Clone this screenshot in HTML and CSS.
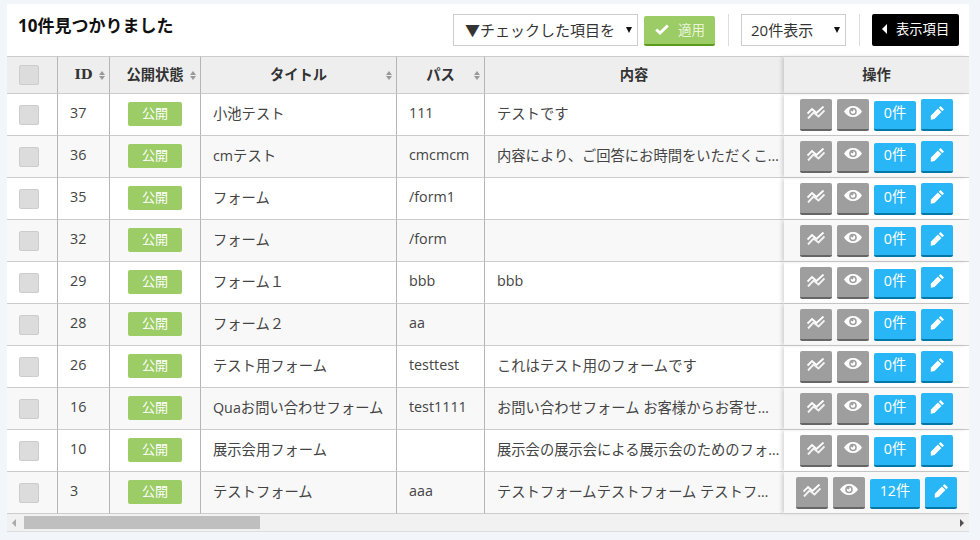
FILE: index.html
```html
<!DOCTYPE html>
<html lang="ja">
<head>
<meta charset="utf-8">
<title>フォーム一覧</title>
<link rel="stylesheet" href="styles.css">
</head>
<body>
<svg class="defs" aria-hidden="true">
  <symbol id="i-chart" viewBox="0 0 18 13"><path d="M0.5 7.500 L5 3 L9.500 7 L16.500 0.500" fill="none" stroke="#fff" stroke-width="1.900"/><path d="M1 12.500 L6.500 6.500 L11.500 10.500 L17.500 4.500" fill="none" stroke="#f4f4f4" stroke-width="1.900"/></symbol>
  <symbol id="i-eye" viewBox="0 0 18 11"><path fill="#fff" fill-rule="evenodd" d="M0 5.500C2 2 5.300 0 9 0s7 2 9 5.500C16 9 12.700 11 9 11S2 9 0 5.500zM9 1.700a3.800 3.800 0 1 0 0 7.600 3.800 3.800 0 0 0 0-7.600z"/><path fill="#fff" d="M9 3.200a2.300 2.300 0 1 1-2.300 2.300c0-.3.100-.6.200-.9.300.5.800.8 1.300.8.700 0 1.300-.6 1.300-1.300 0-.3-.1-.6-.5-.9z"/></symbol>
  <symbol id="i-pencil" viewBox="0 0 14 14"><path fill="#fff" d="M10.500 0 L14 3.500 L12.300 5.200 L8.800 1.700zM7.900 2.600 L11.400 6.100 L4.500 13 L0.800 13.700 L0.800 9.700z"/></symbol>
  <symbol id="i-check" viewBox="0 0 14 11"><path fill="none" stroke="#fff" stroke-width="3" d="M1.200 5.500 L5 9 L12.800 1.500"/></symbol>
</svg>
<main class="panel">
  <header class="toolbar">
    <h1 class="count">10件見つかりました</h1>
    <div class="controls">
      <div class="select-wrap select-action">
        <select class="select"><option>▼チェックした項目を</option></select>
      </div>
      <button class="apply" type="button"><svg class="apply-icon"><use href="#i-check"/></svg>適用</button>
      <span class="divider"></span>
      <div class="select-wrap select-count">
        <select class="select"><option>20件表示</option></select>
      </div>
      <span class="divider"></span>
      <button class="columns" type="button"><span class="caret-left"></span>表示項目</button>
    </div>
  </header>
  <table class="grid">
    <colgroup>
      <col class="c-check"><col class="c-id"><col class="c-status"><col class="c-title"><col class="c-path"><col class="c-body"><col class="c-ops">
    </colgroup>
    <thead>
      <tr>
        <th class="cell-check"><span class="check"></span></th>
        <th class="sortable"><span class="id-label">ID</span></th>
        <th class="sortable">公開状態</th>
        <th class="sortable">タイトル</th>
        <th class="sortable">パス</th>
        <th class="body">内容</th>
        <th class="ops">操作</th>
      </tr>
    </thead>
    <tbody>
      <tr><td class="cell-check"><span class="check"></span></td><td>37</td><td class="mid"><span class="badge">公開</span></td><td>小池テスト</td><td>111</td><td class="body">テストです</td><td class="ops"><div class="btns"><a class="btn gray"><svg class="ic-chart"><use href="#i-chart"/></svg></a><a class="btn gray"><svg class="ic-eye"><use href="#i-eye"/></svg></a><a class="btn num">0件</a><a class="btn blue"><svg class="ic-pencil"><use href="#i-pencil"/></svg></a></div></td></tr>
      <tr><td class="cell-check"><span class="check"></span></td><td>36</td><td class="mid"><span class="badge">公開</span></td><td>cmテスト</td><td>cmcmcm</td><td class="body">内容により、ご回答にお時間をいただくこ…</td><td class="ops"><div class="btns"><a class="btn gray"><svg class="ic-chart"><use href="#i-chart"/></svg></a><a class="btn gray"><svg class="ic-eye"><use href="#i-eye"/></svg></a><a class="btn num">0件</a><a class="btn blue"><svg class="ic-pencil"><use href="#i-pencil"/></svg></a></div></td></tr>
      <tr><td class="cell-check"><span class="check"></span></td><td>35</td><td class="mid"><span class="badge">公開</span></td><td>フォーム</td><td>/form1</td><td class="body"></td><td class="ops"><div class="btns"><a class="btn gray"><svg class="ic-chart"><use href="#i-chart"/></svg></a><a class="btn gray"><svg class="ic-eye"><use href="#i-eye"/></svg></a><a class="btn num">0件</a><a class="btn blue"><svg class="ic-pencil"><use href="#i-pencil"/></svg></a></div></td></tr>
      <tr><td class="cell-check"><span class="check"></span></td><td>32</td><td class="mid"><span class="badge">公開</span></td><td>フォーム</td><td>/form</td><td class="body"></td><td class="ops"><div class="btns"><a class="btn gray"><svg class="ic-chart"><use href="#i-chart"/></svg></a><a class="btn gray"><svg class="ic-eye"><use href="#i-eye"/></svg></a><a class="btn num">0件</a><a class="btn blue"><svg class="ic-pencil"><use href="#i-pencil"/></svg></a></div></td></tr>
      <tr><td class="cell-check"><span class="check"></span></td><td>29</td><td class="mid"><span class="badge">公開</span></td><td>フォーム１</td><td>bbb</td><td class="body">bbb</td><td class="ops"><div class="btns"><a class="btn gray"><svg class="ic-chart"><use href="#i-chart"/></svg></a><a class="btn gray"><svg class="ic-eye"><use href="#i-eye"/></svg></a><a class="btn num">0件</a><a class="btn blue"><svg class="ic-pencil"><use href="#i-pencil"/></svg></a></div></td></tr>
      <tr><td class="cell-check"><span class="check"></span></td><td>28</td><td class="mid"><span class="badge">公開</span></td><td>フォーム２</td><td>aa</td><td class="body"></td><td class="ops"><div class="btns"><a class="btn gray"><svg class="ic-chart"><use href="#i-chart"/></svg></a><a class="btn gray"><svg class="ic-eye"><use href="#i-eye"/></svg></a><a class="btn num">0件</a><a class="btn blue"><svg class="ic-pencil"><use href="#i-pencil"/></svg></a></div></td></tr>
      <tr><td class="cell-check"><span class="check"></span></td><td>26</td><td class="mid"><span class="badge">公開</span></td><td>テスト用フォーム</td><td>testtest</td><td class="body">これはテスト用のフォームです</td><td class="ops"><div class="btns"><a class="btn gray"><svg class="ic-chart"><use href="#i-chart"/></svg></a><a class="btn gray"><svg class="ic-eye"><use href="#i-eye"/></svg></a><a class="btn num">0件</a><a class="btn blue"><svg class="ic-pencil"><use href="#i-pencil"/></svg></a></div></td></tr>
      <tr><td class="cell-check"><span class="check"></span></td><td>16</td><td class="mid"><span class="badge">公開</span></td><td>Quaお問い合わせフォーム</td><td>test1111</td><td class="body">お問い合わせフォーム お客様からお寄せ…</td><td class="ops"><div class="btns"><a class="btn gray"><svg class="ic-chart"><use href="#i-chart"/></svg></a><a class="btn gray"><svg class="ic-eye"><use href="#i-eye"/></svg></a><a class="btn num">0件</a><a class="btn blue"><svg class="ic-pencil"><use href="#i-pencil"/></svg></a></div></td></tr>
      <tr><td class="cell-check"><span class="check"></span></td><td>10</td><td class="mid"><span class="badge">公開</span></td><td>展示会用フォーム</td><td></td><td class="body">展示会の展示会による展示会のためのフォ…</td><td class="ops"><div class="btns"><a class="btn gray"><svg class="ic-chart"><use href="#i-chart"/></svg></a><a class="btn gray"><svg class="ic-eye"><use href="#i-eye"/></svg></a><a class="btn num">0件</a><a class="btn blue"><svg class="ic-pencil"><use href="#i-pencil"/></svg></a></div></td></tr>
      <tr><td class="cell-check"><span class="check"></span></td><td>3</td><td class="mid"><span class="badge">公開</span></td><td>テストフォーム</td><td>aaa</td><td class="body">テストフォームテストフォーム テストフ…</td><td class="ops"><div class="btns"><a class="btn gray"><svg class="ic-chart"><use href="#i-chart"/></svg></a><a class="btn gray"><svg class="ic-eye"><use href="#i-eye"/></svg></a><a class="btn num wide">12件</a><a class="btn blue"><svg class="ic-pencil"><use href="#i-pencil"/></svg></a></div></td></tr>
    </tbody>
  </table>
  <div class="scrollbar">
    <span class="arrow arrow-left"></span>
    <div class="track"><span class="thumb"></span></div>
    <span class="arrow arrow-right"></span>
  </div>
</main>
</body>
</html>
```
FILE: styles.css
```css
* { box-sizing: border-box; }
html, body { margin: 0; height: 100%; }
body {
  background: #f2f6fa;
  padding: 4px 11px 0 7px;
  font-family: "Open Sans", "Noto Sans CJK JP", sans-serif;
  font-size: 14.3px;
  color: #444;
  overflow: hidden;
}
.defs { display: none; }
.panel { background: #fff; width: 962px; border-bottom: 1px solid #ddd; }
.toolbar {
  height: 52px;
  display: flex;
  justify-content: space-between;
  align-items: flex-start;
  padding: 10px 10px 0 11px;
}
.count {
  margin: 0;
  font-size: 17px;
  line-height: 24px;
  font-weight: 700;
  color: #111;
}
.controls { display: flex; align-items: flex-start; }
.select-wrap { position: relative; height: 32px; }
.select-wrap::after {
  content: "";
  position: absolute;
  right: 6px;
  top: 13px;
  border-left: 3px solid transparent;
  border-right: 3px solid transparent;
  border-top: 6px solid #111;
}
.select-action { width: 185px; }
.select-count { width: 105px; }
.select {
  appearance: none;
  -webkit-appearance: none;
  width: 100%;
  height: 32px;
  border: 1px solid #ccc;
  border-radius: 0;
  background: #fff;
  color: #333;
  font: 15px "Open Sans", "Noto Sans CJK JP", sans-serif;
  padding: 0 0 0 9px;
}
.select-action .select { padding-left: 11px; }
.apply {
  width: 71px;
  height: 30px;
  margin: 2px 0 0 6px;
  border: 0;
  border-bottom: 2px solid #5c9a1c;
  border-radius: 2px;
  background: #9ccc65;
  color: #e8f5d8;
  font: 13.5px "Open Sans", "Noto Sans CJK JP", sans-serif;
  display: flex;
  align-items: center;
  gap: 9px;
  padding: 0 0 2px 11px;
}
.apply-icon { width: 14px; height: 11px; }
.divider { width: 1px; height: 32px; background: #ddd; margin: 0 12px 0 13px; }
.columns {
  width: 87px;
  height: 32px;
  border: 0;
  border-radius: 2px;
  background: #000;
  color: #fff;
  font: 13.3px "Open Sans", "Noto Sans CJK JP", sans-serif;
  display: flex;
  align-items: center;
  gap: 9px;
  padding: 0 0 3px 10px;
}
.caret-left {
  border-top: 5px solid transparent;
  border-bottom: 5px solid transparent;
  border-right: 5px solid #fff;
}
.grid {
  width: 962px;
  table-layout: fixed;
  border-collapse: separate;
  border-spacing: 0;
}
.c-check { width: 51px; }
.c-id { width: 52px; }
.c-status { width: 91px; }
.c-title { width: 196px; }
.c-path { width: 88px; }
.c-body { width: 299px; }
.c-ops { width: 185px; }
th, td {
  border-right: 1px solid #b5b5b5;
  border-bottom: 1px solid #ccc;
  padding: 0 0 4px 12px;
  white-space: nowrap;
  overflow: hidden;
}
th {
  height: 38px;
  border-top: 1px solid #ccc;
  background: #eee;
  color: #333;
  font-weight: 700;
  text-align: center;
  padding: 0 0 3px;
  position: relative;
}
td { height: 42px; }
tbody tr:nth-child(even) td { background: #f8f8f8; }
.id-label { font-family: "DejaVu Serif", serif; font-size: 13.5px; }
.sortable::before,
.sortable::after {
  content: "";
  position: absolute;
  right: 4px;
  border-left: 3px solid transparent;
  border-right: 3px solid transparent;
}
.sortable::before { top: 14px; border-bottom: 4px solid #999; }
.sortable::after { top: 19px; border-top: 4px solid #999; }
th.cell-check, td.cell-check { padding: 0 0 0 12px; }
.check {
  display: block;
  width: 20px;
  height: 20px;
  background: #dcdcdc;
  border: 1px solid #ccc;
  border-radius: 2px;
}
td.mid { padding: 0 0 1px 18px; }
.badge {
  display: block;
  width: 54px;
  height: 24px;
  line-height: 22px;
  background: #9ccc65;
  border-radius: 2px;
  color: #fff;
  font-size: 13px;
  text-align: center;
}
th.body, td.body { border-right-color: transparent; }
td.body { padding-right: 0; }
th.ops { padding: 0 0 3px; }
.ops { border-right: 0; box-shadow: -3px 0 4px -1px rgba(0,0,0,.16); position: relative; }
td.ops { padding: 0; }
.btns {
  display: flex;
  justify-content: center;
  align-items: flex-end;
  gap: 5px;
}
.btn {
  height: 32px;
  width: 32px;
  display: flex;
  align-items: center;
  justify-content: center;
  border-radius: 2px;
  color: #fff;
}
.gray { background: #9e9e9e; border-bottom: 2px solid #666; padding-top: 1px; }
.blue { background: #29b6f6; border-bottom: 2px solid #0277a8; }
.num { background: #29b6f6; border-bottom: 2px solid #0277a8; height: 30px; width: 42px; font-size: 14.3px; line-height: 1; padding-bottom: 2px; }
.wide { width: 50px; }
.ic-chart { width: 18px; height: 13px; margin-bottom: 4px; }
.ic-eye { width: 18px; height: 11px; margin-bottom: 6px; }
.ic-pencil { width: 14px; height: 14px; margin-bottom: 2px; }
.scrollbar {
  height: 17px;
  background: #f1f1f1;
  display: flex;
  align-items: center;
}
.track { flex: 1; height: 13px; margin: 0 7px 0 8px; }
.thumb { display: block; width: 236px; height: 13px; background: #bfbfbf; }
.arrow { width: 0; height: 0; border-top: 4px solid transparent; border-bottom: 4px solid transparent; }
.arrow-left { border-right: 4px solid #aaa; margin-left: 5px; }
.arrow-right { border-left: 4px solid #505050; margin-right: 5px; }
```
